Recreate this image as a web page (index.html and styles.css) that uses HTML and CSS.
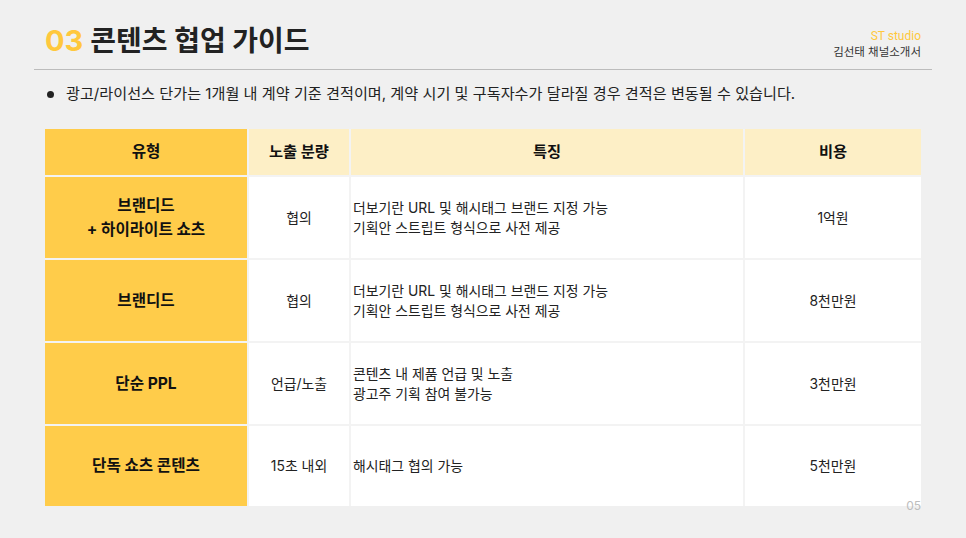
FILE: index.html
```html
<!DOCTYPE html>
<html lang="ko">
<head>
<meta charset="utf-8">
<link rel="stylesheet" href="styles.css">
</head>
<body>
<div class="page">
  <header class="top">
    <h1 class="title"><span class="num">03</span>콘텐츠 협업 가이드</h1>
    <div class="brand">
      <div class="studio">ST studio</div>
      <div class="doc">김선태 채널소개서</div>
    </div>
  </header>
  <div class="rule"></div>
  <p class="note"><span class="dot"></span>광고/라이선스 단가는 1개월 내 계약 기준 견적이며, 계약 시기 및 구독자수가 달라질 경우 견적은 변동될 수 있습니다.</p>
  <div class="grid">
    <div class="cell head type">유형</div>
    <div class="cell head">노출 분량</div>
    <div class="cell head">특징</div>
    <div class="cell head">비용</div>

    <div class="cell type">브랜디드<br>+ 하이라이트 쇼츠</div>
    <div class="cell">협의</div>
    <div class="cell desc">더보기란 URL 및 해시태그 브랜드 지정 가능<br>기획안 스트립트 형식으로 사전 제공</div>
    <div class="cell">1억원</div>

    <div class="cell type">브랜디드</div>
    <div class="cell">협의</div>
    <div class="cell desc">더보기란 URL 및 해시태그 브랜드 지정 가능<br>기획안 스트립트 형식으로 사전 제공</div>
    <div class="cell">8천만원</div>

    <div class="cell type">단순 PPL</div>
    <div class="cell">언급/노출</div>
    <div class="cell desc">콘텐츠 내 제품 언급 및 노출<br>광고주 기획 참여 불가능</div>
    <div class="cell">3천만원</div>

    <div class="cell type">단독 쇼츠 콘텐츠</div>
    <div class="cell">15초 내외</div>
    <div class="cell desc">해시태그 협의 가능</div>
    <div class="cell">5천만원</div>
  </div>
  <div class="pagenum">05</div>
</div>
</body>
</html>
```

FILE: styles.css
```css
* { box-sizing: border-box; }
html, body {
  margin: 0;
  padding: 0;
  background: #f0f0f0;
}
body {
  font-family: Inter, "Noto Sans CJK KR", sans-serif;
  color: #222;
}
.page {
  width: 966px;
  height: 538px;
  position: relative;
  overflow: hidden;
}
.top {
  display: flex;
  justify-content: space-between;
  align-items: flex-end;
  padding: 22px 45px 0 45px;
  height: 61px;
}
.title {
  margin: 0;
  font-size: 28px;
  font-weight: 700;
  line-height: 40px;
  color: #222;
}
.num {
  color: #ffc83d;
  margin-right: 7px;
  font-size: 29px;
  font-family: Inter, "Noto Sans CJK KR", sans-serif;
}
.brand {
  text-align: right;
  line-height: 15px;
  padding-bottom: 2px;
}
.studio {
  color: #ffc83d;
  font-size: 12px;
  font-family: Roboto, "Noto Sans CJK KR", sans-serif;
}
.doc {
  color: #333;
  font-size: 11.5px;
  font-family: "Noto Sans CJK KR", sans-serif;
}
.rule {
  margin: 8px 34px 0 34px;
  height: 1px;
  background: #bcbcbc;
}
.note {
  margin: 14px 0 0 47px;
  font-size: 15.15px;
  line-height: 20px;
  display: flex;
  align-items: center;
  color: #222;
}
.dot {
  width: 7px;
  height: 7px;
  border-radius: 50%;
  background: #222;
  margin-right: 12px;
  flex: none;
}
.grid {
  margin: 25px 0 0 45px;
  width: 876px;
  display: grid;
  grid-template-columns: 202px 100px 392px 176px;
  grid-template-rows: 46px 81px 81px 81px 80px;
  gap: 2px;
  background: #f3f3f3;
}
.cell {
  background: #fff;
  display: flex;
  align-items: center;
  justify-content: center;
  text-align: center;
  font-size: 13.9px;
  line-height: 20px;
  color: #222;
}
.cell.head {
  background: #fdefc6;
  font-weight: 700;
  font-size: 15.3px;
  color: #111;
}
.cell.type {
  background: #ffcc4a;
  font-weight: 700;
  font-size: 15.6px;
  line-height: 24px;
  color: #111;
}
.cell.desc {
  justify-content: flex-start;
  text-align: left;
  padding-left: 2px;
}
.pagenum {
  position: absolute;
  right: 45px;
  top: 498px;
  font-size: 12px;
  color: #bdbdbd;
  font-family: Inter, sans-serif;
}
```
